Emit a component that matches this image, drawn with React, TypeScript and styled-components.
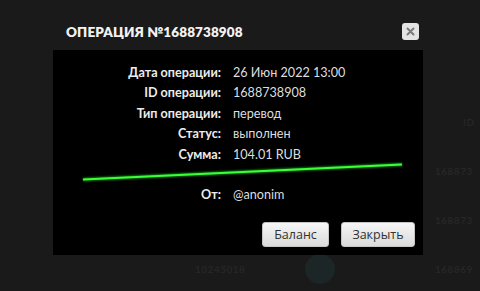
import React from "react";
import styled, { createGlobalStyle } from "styled-components";

const GlobalStyle = createGlobalStyle`
  html, body { margin: 0; padding: 0; background: #1a1a1a; }
  #root { width: 480px; height: 291px; }
`;

const Page = styled.div`
  position: relative;
  width: 480px;
  height: 291px;
  overflow: hidden;
  background: #1a1a1a;
  font-family: "Lato", "Open Sans", sans-serif;
`;

const BgTable = styled.div`
  display: flex;
  flex-direction: column;
  padding-top: 97px;
`;

const BgRow = styled.div`
  display: grid;
  grid-template-columns: 195px 110px 130px 45px;
  align-items: center;
  height: 49px;
  color: #262626;
  font-size: 10px;
  font-weight: 700;
  letter-spacing: 0.5px;
  white-space: nowrap;
`;

const BgCell = styled.div<{ $pad?: number }>`
  padding-left: ${(p) => p.$pad || 0}px;
  overflow: hidden;
`;

const BgAvatar = styled.div`
  width: 30px;
  height: 30px;
  border-radius: 50%;
  background: #1c2626;
`;

const Modal = styled.div`
  position: absolute;
  left: 53px;
  top: 14px;
  width: 370px;
  display: flex;
  flex-direction: column;
`;

const Header = styled.div`
  height: 36px;
  display: flex;
  align-items: center;
  justify-content: space-between;
  padding: 0 4px 0 13px;
`;

const Title = styled.h2`
  margin: 0;
  color: #f2f2f2;
  font-family: "Lato", "Open Sans", sans-serif;
  font-weight: 800;
  font-size: 13.5px;
  letter-spacing: 0.1px;
`;

const CloseBtn = styled.button`
  width: 17px;
  height: 17px;
  border: none;
  border-radius: 3px;
  background: #e4e4e4;
  padding: 0;
  display: flex;
  align-items: center;
  justify-content: center;
  margin-bottom: 2px;
`;

const Body = styled.div`
  background: #000;
  padding: 12px 8px 8px 0;
  display: flex;
  flex-direction: column;
`;

const InfoGrid = styled.div`
  display: grid;
  grid-template-columns: 168px 1fr;
  column-gap: 12px;
  grid-auto-rows: 20.5px;
  align-items: center;
  font-size: 12.6px;
  font-family: "Lato", "Open Sans", sans-serif;
`;

const Label = styled.div`
  text-align: right;
  color: #ececec;
  font-weight: 700;
`;

const Value = styled.div`
  color: #dedede;
  font-weight: 400;
`;

const Divider = styled.svg`
  display: block;
  width: 362px;
  height: 23px;
  margin-top: -3px;
`;

const Buttons = styled.div`
  display: flex;
  justify-content: flex-end;
  gap: 12px;
  margin-top: 17px;
`;

const Btn = styled.button<{ $w: number }>`
  width: ${(p) => p.$w}px;
  height: 25px;
  border: 1px solid #c4c4c4;
  border-radius: 3px;
  background: linear-gradient(#f6f6f6, #dadada);
  color: #333;
  font-family: "Open Sans", "Liberation Sans", sans-serif;
  font-size: 12.5px;
  padding: 0;
`;

const rows: [string, string][] = [
  ["Дата операции:", "26 Июн 2022 13:00"],
  ["ID операции:", "1688738908"],
  ["Тип операции:", "перевод"],
  ["Статус:", "выполнен"],
  ["Сумма:", "104.01 RUB"],
];

export default function App() {
  return (
    <>
      <GlobalStyle />
      <Page>
        <BgTable>
          <BgRow>
            <BgCell />
            <BgCell />
            <BgCell />
            <BgCell $pad={28}>ID</BgCell>
          </BgRow>
          <BgRow>
            <BgCell />
            <BgCell />
            <BgCell />
            <BgCell>168873</BgCell>
          </BgRow>
          <BgRow>
            <BgCell />
            <BgCell />
            <BgCell />
            <BgCell>168873</BgCell>
          </BgRow>
          <BgRow>
            <BgCell />
            <BgCell>10245018</BgCell>
            <BgCell><BgAvatar /></BgCell>
            <BgCell>168869</BgCell>
          </BgRow>
        </BgTable>
        <Modal>
          <Header>
            <Title>ОПЕРАЦИЯ №1688738908</Title>
            <CloseBtn aria-label="close">
              <svg width="9" height="9" viewBox="0 0 9 9">
                <path d="M1.5 1.5 L7.5 7.5 M7.5 1.5 L1.5 7.5" stroke="#7a7a7a" strokeWidth="2" strokeLinecap="round" />
              </svg>
            </CloseBtn>
          </Header>
          <Body>
            <InfoGrid>
              {rows.map(([l, v]) => (
                <React.Fragment key={l}>
                  <Label>{l}</Label>
                  <Value>{v}</Value>
                </React.Fragment>
              ))}
            </InfoGrid>
            <Divider viewBox="0 0 362 23">
              <defs>
                <filter id="glow" x="-10%" y="-200%" width="120%" height="500%">
                  <feGaussianBlur stdDeviation="1.2" />
                </filter>
              </defs>
              <line x1="30" y1="17.5" x2="349" y2="2.5" stroke="#22ff22" strokeWidth="3" opacity="0.6" filter="url(#glow)" />
              <line x1="30" y1="17.5" x2="349" y2="2.5" stroke="#3cff3c" strokeWidth="1.8" />
            </Divider>
            <InfoGrid>
              <Label>От:</Label>
              <Value>@anonim</Value>
            </InfoGrid>
            <Buttons>
              <Btn $w={67}>Баланс</Btn>
              <Btn $w={74}>Закрыть</Btn>
            </Buttons>
          </Body>
        </Modal>
      </Page>
    </>
  );
}
